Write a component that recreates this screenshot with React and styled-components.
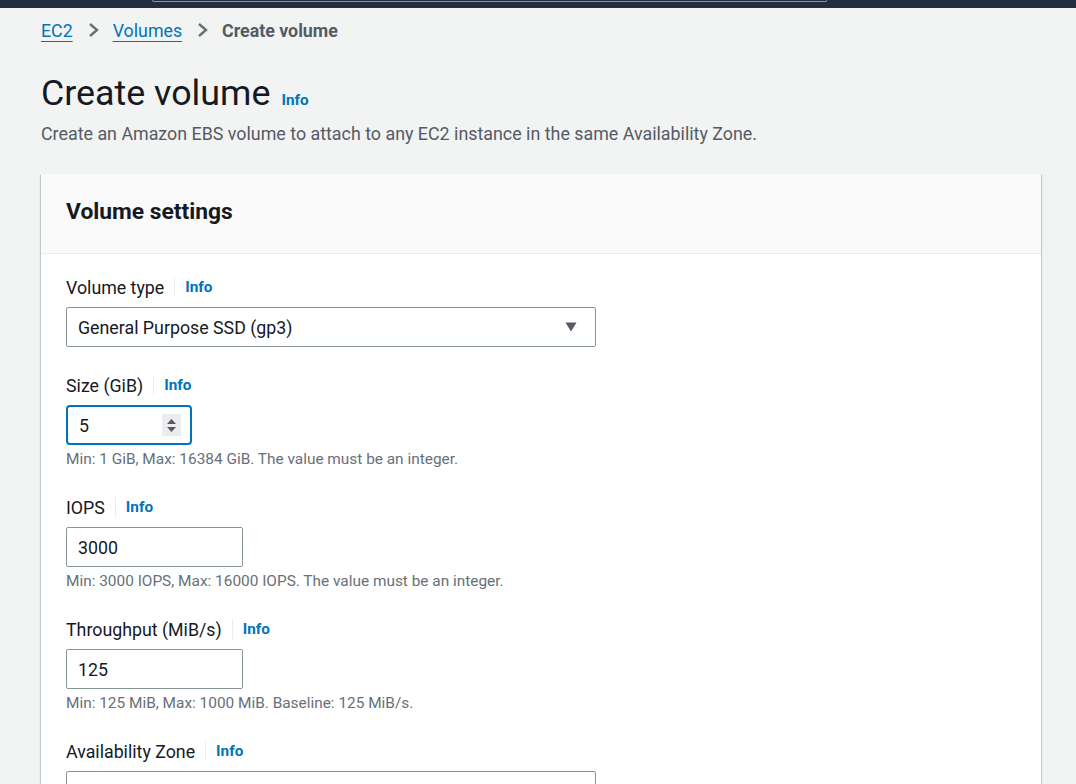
import styled, { createGlobalStyle } from 'styled-components';

const GlobalStyle = createGlobalStyle`
	body {
		margin: 0;
		background-color: #f2f3f3;
		font-family: Roboto, 'Noto Sans', Arial, sans-serif;
		color: #16191f;
	}
`;

const TopBar = styled.header`
	height: 8px;
	background-color: #232f3e;
	padding-left: 152px;
	overflow: hidden;
`;

const SearchEdge = styled.div`
	box-sizing: border-box;
	width: 675px;
	height: 2px;
	border: 1px solid #8d969e;
	border-top: 0;
	border-radius: 0 0 4px 4px;
`;

const Main = styled.main`
	box-sizing: border-box;
	width: 1041px;
	padding: 11px 0 40px 41px;
`;

const Breadcrumbs = styled.nav`
	display: flex;
	align-items: center;
	height: 22px;
	font-size: 17.8px;
`;

const Crumb = styled.a`
	color: #0073bb;
	text-decoration: underline;
	text-underline-offset: 4px;
	text-decoration-thickness: 1px;
`;

const CurrentCrumb = styled.span`
	color: #545b64;
	font-weight: 700;
`;

const ChevronIcon = styled.svg`
	width: 11px;
	height: 16px;
	margin: 0 14px 0 15px;
	fill: none;
	stroke: #687078;
	stroke-width: 2.4;
`;

function Chevron() {
	return (
		<ChevronIcon viewBox="0 0 11 16">
			<path d="M2 2 L9 8 L2 14" />
		</ChevronIcon>
	);
}

const TitleRow = styled.div`
	display: flex;
	align-items: baseline;
	gap: 11px;
	margin-top: 30px;
`;

const Title = styled.h1`
	margin: 0;
	font-size: 35.8px;
	line-height: 44px;
	font-weight: 400;
	color: #16191f;
`;

const InfoLink = styled.a`
	color: #0073bb;
	font-size: 15.3px;
	font-weight: 700;
	text-decoration: none;
`;

const Description = styled.p`
	margin: 8px 0 0;
	font-size: 17.85px;
	line-height: 22px;
	color: #545b64;
`;

const Card = styled.section`
	margin-top: 29px;
	width: 1000px;
	background-color: #ffffff;
	box-shadow: 0 1px 1px 0 rgba(0, 28, 36, 0.3), 1px 1px 1px 0 rgba(0, 28, 36, 0.15),
		-1px 1px 1px 0 rgba(0, 28, 36, 0.15);
`;

const CardHeader = styled.div`
	padding: 23px 25px 27px;
	background-color: #fafafa;
	border-bottom: 1px solid #eaeded;
`;

const CardTitle = styled.h2`
	margin: 0;
	font-size: 22.8px;
	line-height: 29px;
	font-weight: 700;
`;

const CardBody = styled.div`
	display: flex;
	flex-direction: column;
	gap: 27px;
	padding: 22px 25px 30px;
`;

const Field = styled.div`
	display: flex;
	flex-direction: column;
	align-items: flex-start;
`;

const LabelRow = styled.div`
	display: flex;
	align-items: center;
	height: 22px;
	margin-bottom: 9px;
`;

const Label = styled.label`
	font-size: 17.8px;
	color: #16191f;
`;

const Divider = styled.span`
	width: 1px;
	height: 20px;
	margin: 0 10px;
	background-color: #eaeded;
`;

const Box = styled.div`
	box-sizing: border-box;
	display: flex;
	align-items: center;
	justify-content: space-between;
	width: ${(p) => p.$width}px;
	height: 40px;
	padding: 0 ${(p) => (p.$focused ? 9 : 12)}px 0 11px;
	background-color: #ffffff;
	border: ${(p) => (p.$focused ? '2px solid #0073bb' : '1px solid #879596')};
	border-radius: ${(p) => (p.$focused ? 4 : 2)}px;
`;

const TextInput = styled.input`
	flex: 1;
	min-width: 0;
	border: 0;
	outline: none;
	padding: 0;
	background: transparent;
	font-family: inherit;
	font-size: 17.8px;
	color: #16191f;
`;

const SelectValue = styled.span`
	font-size: 17.8px;
	color: #16191f;
`;

const Caret = styled.svg`
	width: 12px;
	height: 10px;
	margin-right: 6px;
	fill: #545b64;
`;

const Spinner = styled.span`
	display: flex;
	flex-direction: column;
	align-items: center;
	justify-content: center;
	gap: 3px;
	width: 19px;
	height: 22px;
	background-color: #ececec;

	& svg {
		width: 9px;
		height: 5px;
		fill: #545b64;
	}
`;

const Hint = styled.div`
	margin-top: 4px;
	font-size: 15.4px;
	line-height: 20px;
	color: #687078;
`;

function FieldLabel({ children }) {
	return (
		<LabelRow>
			<Label>{children}</Label>
			<Divider />
			<InfoLink href="#">Info</InfoLink>
		</LabelRow>
	);
}

function Select({ value }) {
	return (
		<Box $width={530}>
			<SelectValue>{value}</SelectValue>
			<Caret viewBox="0 0 12 10">
				<path d="M0.5 0.5 H11.5 L6 9.5 Z" />
			</Caret>
		</Box>
	);
}

function NumberInput({ value, width, focused }) {
	return (
		<Box $width={width} $focused={focused}>
			<TextInput defaultValue={value} />
			{focused && (
				<Spinner>
					<svg viewBox="0 0 9 5">
						<path d="M0 5 L4.5 0 L9 5 Z" />
					</svg>
					<svg viewBox="0 0 9 5">
						<path d="M0 0 L9 0 L4.5 5 Z" />
					</svg>
				</Spinner>
			)}
		</Box>
	);
}

export default function App() {
	return (
		<>
			<GlobalStyle />
			<TopBar>
				<SearchEdge />
			</TopBar>
			<Main>
				<Breadcrumbs>
					<Crumb href="#">EC2</Crumb>
					<Chevron />
					<Crumb href="#">Volumes</Crumb>
					<Chevron />
					<CurrentCrumb>Create volume</CurrentCrumb>
				</Breadcrumbs>
				<TitleRow>
					<Title>Create volume</Title>
					<InfoLink href="#">Info</InfoLink>
				</TitleRow>
				<Description>
					Create an Amazon EBS volume to attach to any EC2 instance in the same Availability Zone.
				</Description>
				<Card>
					<CardHeader>
						<CardTitle>Volume settings</CardTitle>
					</CardHeader>
					<CardBody>
						<Field>
							<FieldLabel>Volume type</FieldLabel>
							<Select value="General Purpose SSD (gp3)" />
						</Field>
						<Field>
							<FieldLabel>Size (GiB)</FieldLabel>
							<NumberInput value="5" width={126} focused />
							<Hint>Min: 1 GiB, Max: 16384 GiB. The value must be an integer.</Hint>
						</Field>
						<Field>
							<FieldLabel>IOPS</FieldLabel>
							<NumberInput value="3000" width={177} />
							<Hint>Min: 3000 IOPS, Max: 16000 IOPS. The value must be an integer.</Hint>
						</Field>
						<Field>
							<FieldLabel>Throughput (MiB/s)</FieldLabel>
							<NumberInput value="125" width={177} />
							<Hint>Min: 125 MiB, Max: 1000 MiB. Baseline: 125 MiB/s.</Hint>
						</Field>
						<Field>
							<FieldLabel>Availability Zone</FieldLabel>
							<Select value="" />
						</Field>
					</CardBody>
				</Card>
			</Main>
		</>
	);
}
